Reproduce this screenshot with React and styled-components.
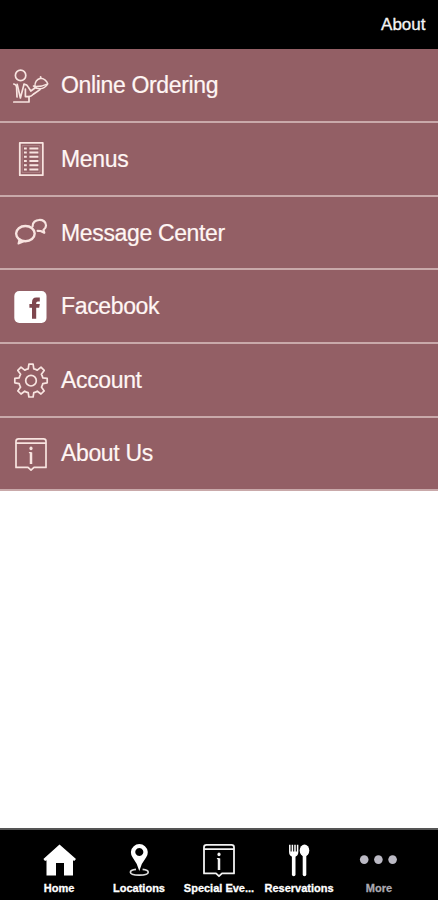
import styled, { createGlobalStyle } from 'styled-components';

const GlobalStyle = createGlobalStyle`
  body {
    margin: 0;
    background-color: #fff;
    font-family: "Liberation Sans", Arial, sans-serif;
  }
  `;

const Screen = styled.div`
  display: flex;
  flex-direction: column;
  height: 900px;
  overflow: hidden;
  `;

const Header = styled.header`
  display: flex;
  justify-content: flex-end;
  align-items: center;
  box-sizing: border-box;
  height: 49px;
  padding: 1px 12.5px 0 0;
  background-color: #000;
  color: #f4f4f4;
  font-size: 17px;
  -webkit-text-stroke: 0.3px #f4f4f4;
  `;

const MenuList = styled.ul`
  flex: 1;
  margin: 0;
  padding: 0;
  list-style-type: none;
  `;

const MenuItem = styled.li`
  display: flex;
  align-items: center;
  gap: 13px;
  box-sizing: border-box;
  height: 73.6px;
  padding: 1px 0 0 12px;
  border-bottom: 2px solid #c9a9aa;
  background-color: #935f65;
  color: #fff6f4;
  font-size: 23px;
  letter-spacing: -0.35px;
  -webkit-text-stroke: 0.2px #fff6f4;

  &:first-child {
    height: 74.2px;
  }
  `;

const MenuIcon = styled.svg`
  width: 36px;
  height: 36px;
  flex-shrink: 0;
  fill: none;
  stroke: #f8e4e0;
  stroke-width: 1.7;
  stroke-linecap: round;
  stroke-linejoin: round;
  overflow: visible;
  `;

const TabBar = styled.nav`
  display: flex;
  box-sizing: border-box;
  height: 72px;
  padding: 0 19px;
  border-top: 2px solid #555;
  background-color: #000;
  `;

const Tab = styled.div`
  display: flex;
  flex-direction: column;
  align-items: center;
  width: 80px;
  padding-top: 13px;
  color: ${({ $muted }) => ($muted ? '#aaa9b1' : '#fff')};
  `;

const TabIcon = styled.svg`
  width: 40px;
  height: 36px;
  fill: none;
  stroke: none;
  stroke-linejoin: round;
  `;

const TabLabel = styled.span`
  margin-top: 3px;
  font-size: 11px;
  font-weight: 700;
  line-height: 12px;
  white-space: nowrap;
  -webkit-text-stroke: 0.3px currentColor;
  `;

const WaiterIcon = () => (
  <MenuIcon viewBox="0 0 36 36">
    <circle cx="8.6" cy="7.4" r="5.2" />
    <path d="M1.8 16 Q4.3 16.6 4.6 19 L5 29" />
    <path d="M5.2 16.4 L8.4 30 L12 16.4" />
    <path d="M12 16.4 Q14.8 16 16 18.6 L18.8 23 L24 19.2" />
    <path d="M13.4 21 V28.6 H17 V34 H1.8" />
    <path d="M17 28.6 Q19.5 28.4 21.3 26.3 L28 21.6" />
    <path d="M23 18.6 Q22.5 11.4 29 10.2 Q34 11 35.8 15.8 Q33 20.4 28 20.8 Q24 21 21.4 18 L23 18.4 Q29.5 18.8 35.8 15.8" strokeWidth="1.4" />
    <path d="M28.6 10 V8.8" />
  </MenuIcon>
);

const MenuSheetIcon = () => (
  <MenuIcon viewBox="0 0 36 36">
    <rect x="7.8" y="1.8" width="23" height="32.4" strokeWidth="1.8" />
    <rect x="10.6" y="4.6" width="17.4" height="26.8" strokeWidth="0.5" opacity="0.5" />
    {[7.4, 11.6, 15.8, 20, 24.2, 28.4].map((y) => (
      <path key={y} d={`M12 ${y} h2.8 M17.4 ${y} h9`} strokeWidth="2" strokeLinecap="butt" />
    ))}
  </MenuIcon>
);

const ChatIcon = () => (
  <MenuIcon viewBox="0 0 36 36">
    <path d="M20.6 11.4 C20 3 34.4 3 34 10.4 C34 12.4 33 13.8 31.5 14.8 L32.3 17.8 L28.6 16 L25.6 15.8" strokeWidth="2.2" />
    <ellipse cx="13.4" cy="18.6" rx="9.3" ry="7.6" strokeWidth="2.4" />
    <path d="M7.5 24 L6.4 28.6 L12.4 26.2" fill="#f8e4e0" strokeWidth="1.8" />
  </MenuIcon>
);

const FacebookIcon = () => (
  <MenuIcon viewBox="0 0 36 36">
    <rect x="2.3" y="2" width="32.2" height="32" rx="5" fill="#fff" stroke="none" />
    <path
      d="M20 29.8 V18.8 H17.4 V15 H20 V13.4 Q20 8.6 24.2 8.6 H27.8 V12.4 H25.8 Q24.2 12.4 24.2 14 V15 H27.8 L27.2 18.8 H24.2 V29.8 Z"
      fill="#7e464d"
      stroke="none"
    />
  </MenuIcon>
);

const GearIcon = () => (
  <MenuIcon viewBox="0 0 36 36">
    <path d="M16.9 2.2 H21.1 L21.8 6.9 Q23.8 7.2 25.3 8.2 L29 5.2 L32.2 8.4 L29.4 12.2 Q30.5 14 30.8 15.8 L35.2 16.4 V20.8 L30.8 21.6 Q30.5 23.4 29.4 25.1 L32.2 28.9 L29 32 L25.3 29.2 Q23.8 30.2 21.8 30.6 L21.1 35 H16.9 L16.2 30.6 Q14.2 30.2 12.7 29.2 L9 32 L5.8 28.9 L8.6 25.1 Q7.5 23.4 7.2 21.6 L2.8 20.8 V16.4 L7.2 15.8 Q7.5 14 8.6 12.2 L5.8 8.4 L9 5.2 L12.7 8.2 Q14.2 7.2 16.2 6.9 Z" />
    <circle cx="19" cy="18.7" r="5.3" />
  </MenuIcon>
);

const InfoShapes = () => (
  <>
    <path d="M6.5 2.8 H31.5 Q34 2.8 34 5.2 V31.4 H22 L19 34.2 L16 31.4 H4 V5.2 Q4 2.8 6.5 2.8 Z" />
    <path d="M4.5 7.2 H33.5" />
    <path d="M19 16.4 V28" strokeWidth="2.5" strokeLinecap="butt" />
    <path d="M17.4 16.6 H19" strokeWidth="1.2" />
    <path d="M19 12.2 V12.6" strokeWidth="3.2" />
  </>
);

const InfoIcon = () => (
  <MenuIcon viewBox="0 0 36 36">
    <InfoShapes />
  </MenuIcon>
);

const HomeTabIcon = () => (
  <TabIcon viewBox="0 0 40 36">
    <path
      d="M20.5 1.6 L37 16 L35.2 18 L34 17.2 V32.4 H25 V20 H17 V32.4 H7.5 V17.2 L6 18 L4.4 16 Z"
      fill="#fff"
    />
  </TabIcon>
);

const LocationTabIcon = () => (
  <TabIcon viewBox="0 0 40 36">
    <path
      d="M20.3 28 Q18 20 13.5 14.3 A8.4 8.4 0 1 1 27.2 14.3 Q22.5 20 20.3 28 Z M20.3 5 a4 4 0 1 0 0.01 0 Z"
      fill="#fff"
      fillRule="evenodd"
    />
    <path d="M17 26.4 Q11.4 26.8 11.4 29.2 C11.4 33 29.2 33 29.2 29.2 Q29.2 26.8 23.6 26.4" stroke="#ddd" strokeWidth="1.7" />
  </TabIcon>
);

const EventTabIcon = () => (
  <TabIcon viewBox="-1 0 40 36">
    <g stroke="#f2f2f2" strokeWidth="1.8" strokeLinecap="round" transform="translate(0 -1)">
      <InfoShapes />
    </g>
  </TabIcon>
);

const UtensilsTabIcon = () => (
  <TabIcon viewBox="0 0 40 36">
    <path d="M10.8 1.8 V9 Q10.8 13 14.7 13 Q18.6 13 18.6 9 V1.8 M13.4 1.8 V11 M16 1.8 V11" stroke="#fff" strokeWidth="1.5" />
    <path d="M11 8.5 H18.4 Q18 13.5 14.7 13.5 Q11.4 13.5 11 8.5 Z" fill="#fff" />
    <path d="M14.7 12 V31.4" stroke="#fff" strokeWidth="3.6" strokeLinecap="round" />
    <ellipse cx="25.5" cy="7.5" rx="4.8" ry="6" fill="#fff" />
    <path d="M25.5 12 V31.4" stroke="#fff" strokeWidth="3.6" strokeLinecap="round" />
  </TabIcon>
);

const MoreTabIcon = () => (
  <TabIcon viewBox="0 0 40 36">
    {[5.2, 19.4, 33.6].map((x) => (
      <circle key={x} cx={x} cy="16.6" r="4.3" fill="#bbb9c4" />
    ))}
  </TabIcon>
);

const menuItems = [
  { label: 'Online Ordering', Icon: WaiterIcon },
  { label: 'Menus', Icon: MenuSheetIcon },
  { label: 'Message Center', Icon: ChatIcon },
  { label: 'Facebook', Icon: FacebookIcon },
  { label: 'Account', Icon: GearIcon },
  { label: 'About Us', Icon: InfoIcon },
];

const tabs = [
  { label: 'Home', Icon: HomeTabIcon },
  { label: 'Locations', Icon: LocationTabIcon },
  { label: 'Special Eve...', Icon: EventTabIcon },
  { label: 'Reservations', Icon: UtensilsTabIcon },
  { label: 'More', Icon: MoreTabIcon, muted: true },
];

const App = () => (
  <>
    <GlobalStyle />
    <Screen>
      <Header>About</Header>
      <MenuList>
        {menuItems.map(({ label, Icon }) => (
          <MenuItem key={label}>
            <Icon />
            {label}
          </MenuItem>
        ))}
      </MenuList>
      <TabBar>
        {tabs.map(({ label, Icon, muted }) => (
          <Tab key={label} $muted={muted}>
            <Icon />
            <TabLabel>{label}</TabLabel>
          </Tab>
        ))}
      </TabBar>
    </Screen>
  </>
);

export default App;
